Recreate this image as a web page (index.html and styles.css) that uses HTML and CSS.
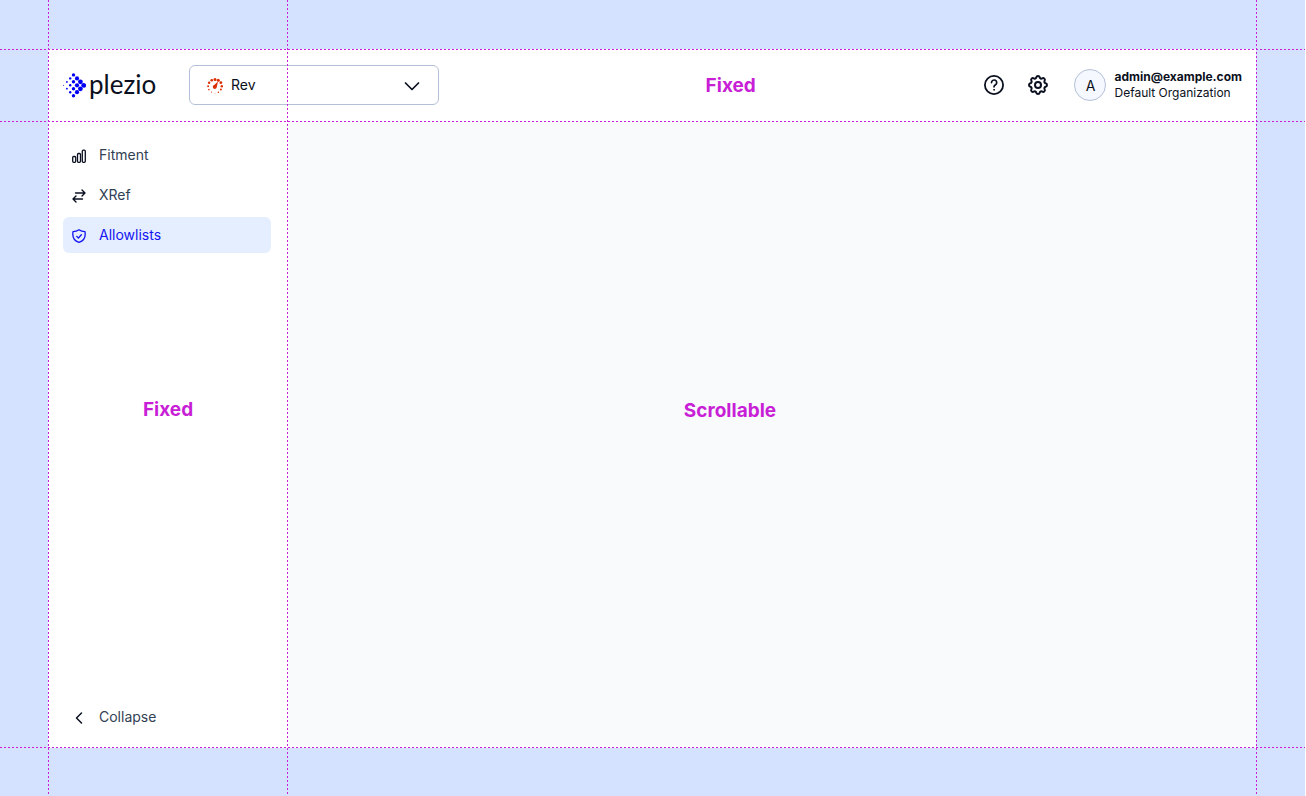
FILE: index.html
```html
<!DOCTYPE html>
<html lang="en">
<head>
<meta charset="utf-8">
<title>Plezio layout</title>
<link rel="stylesheet" href="styles.css">
</head>
<body>
<div class="stage">
  <div class="app">
    <header class="header">
      <a class="logo" href="#">
        <svg class="logo-mark" viewBox="0 0 24 26" width="24" height="26" fill="#0000f5" aria-hidden="true">
          <circle cx="1.5" cy="13.3" r=".5"/>
          <circle cx="4.9" cy="9.9" r=".9"/><circle cx="4.9" cy="16.7" r=".9"/>
          <circle cx="8.2" cy="6.4" r="1.2"/><circle cx="8.2" cy="13.3" r="1.2"/><circle cx="8.2" cy="20.2" r="1.2"/>
          <circle cx="11.5" cy="2.9" r="1.7"/><circle cx="11.5" cy="9.8" r="1.7"/><circle cx="11.5" cy="16.8" r="1.7"/><circle cx="11.5" cy="23.7" r="1.7"/>
          <circle cx="15" cy="6.4" r="2.1"/><circle cx="15" cy="13.3" r="2.1"/><circle cx="15" cy="20.2" r="2.1"/>
          <circle cx="18.4" cy="9.8" r="2.4"/><circle cx="18.4" cy="16.8" r="2.4"/>
          <circle cx="21.7" cy="13.3" r="2.4"/>
        </svg>
        <span class="logo-text">plezio</span>
      </a>
      <button class="picker" type="button">
        <svg class="product" viewBox="0 0 16 16" width="16" height="16" fill="#dc2f02" aria-hidden="true">
          <circle cx="8" cy="1.5" r="1.5"/><circle cx="4.7" cy="2.3" r="1.300"/><circle cx="2.1" cy="4.7" r="1.200"/><circle cx="1.100" cy="8.3" r="1"/><circle cx="1.9" cy="11.6" r=".8"/><circle cx="4.5" cy="14" r=".6"/><circle cx="8" cy="15.2" r=".4"/>
          <circle cx="11.3" cy="2.3" r="1.5"/><circle cx="13.900" cy="4.700" r="1.4"/><circle cx="14.800" cy="8.3" r="1.200"/><circle cx="13.900" cy="11.6" r="1"/><circle cx="11.4" cy="14.2" r=".8"/>
          <path d="M11 3.500 9.800 9a2 2 0 1 1-2.600-2z"/>
        </svg>
        <span class="picker-name">Rev</span>
        <svg class="line arrow" viewBox="0 0 16 16" width="16" height="16" aria-hidden="true"><path d="m1.500 5 6.500 6.500L14.500 5" stroke-width="1.700"/></svg>
      </button>
      <strong class="note">Fixed</strong>
      <button class="icon-button" type="button" aria-label="Help">
        <svg class="line" viewBox="0 0 20 20" width="20" height="20"><circle cx="10" cy="10" r="9.100" stroke-width="1.8"/><path d="M7.500 7.600a2.600 2.600 0 1 1 4 2.200c-.9.600-1.500 1-1.500 2" stroke-width="1.700"/><circle cx="10" cy="14.800" r=".5" stroke-width="1"/></svg>
      </button>
      <button class="icon-button" type="button" aria-label="Settings">
        <svg class="line" viewBox="2 2 20 20" width="20" height="20" stroke-width="2"><path d="M10.325 4.317c.426-1.756 2.924-1.756 3.350 0a1.724 1.724 0 0 0 2.573 1.066c1.543-.94 3.310.826 2.370 2.370a1.724 1.724 0 0 0 1.065 2.572c1.756.426 1.756 2.924 0 3.350a1.724 1.724 0 0 0-1.066 2.573c.94 1.543-.826 3.310-2.370 2.370a1.724 1.724 0 0 0-2.572 1.065c-.426 1.756-2.924 1.756-3.350 0a1.724 1.724 0 0 0-2.573-1.066c-1.543.94-3.310-.826-2.370-2.370a1.724 1.724 0 0 0-1.065-2.572c-1.756-.426-1.756-2.924 0-3.350a1.724 1.724 0 0 0 1.066-2.573c-.94-1.543.826-3.310 2.370-2.370 1 .608 2.296.070 2.572-1.065z"/><circle cx="12" cy="12" r="3"/></svg>
      </button>
      <div class="account">
        <span class="avatar">A</span>
        <div class="account-text"><strong>admin@example.com</strong><span>Default Organization</span></div>
      </div>
    </header>
    <nav class="sidebar">
      <a class="item" href="#"><svg class="line" viewBox="0 0 16 16" width="16" height="16" stroke-width="1.300"><rect x="1.700" y="8.500" width="3" height="5.800" rx="1"/><rect x="6.500" y="5.500" width="3" height="8.800" rx="1"/><rect x="11.300" y="2.200" width="3" height="12.100" rx="1"/></svg>Fitment</a>
      <a class="item" href="#"><svg class="line" viewBox="0 0 16 16" width="16" height="16" stroke-width="1.400"><path d="M4.500 5H14M11 2l3 3-3 3M11.500 11H2M5 8l-3 3 3 3"/></svg>XRef</a>
      <a class="item active" href="#"><svg class="line" viewBox="0 0 16 16" width="16" height="16" stroke-width="1.300"><path d="M8 1.800C6.200 3.200 4.300 3.700 2 3.700c-.8 5 1.300 9.200 6 10.700 4.700-1.500 6.800-5.700 6-10.700-2.300 0-4.200-.5-6-1.900z"/><path d="m5.700 8.400 1.700 1.600 3-3.300"/></svg>Allowlists</a>
      <strong class="note">Fixed</strong>
      <button class="item" type="button"><svg class="line" viewBox="0 0 16 16" width="16" height="16" stroke-width="1.500"><path d="M10.500 3 5.500 8l5 5"/></svg>Collapse</button>
    </nav>
    <main class="content"><strong class="note">Scrollable</strong></main>
  </div>
  <i class="guide down at-left"></i>
  <i class="guide down at-split"></i>
  <i class="guide down at-right"></i>
  <i class="guide across at-top"></i>
  <i class="guide across at-header"></i>
  <i class="guide across at-bottom"></i>
</div>
</body>
</html>
```
FILE: styles.css
```css
:root {
  --edge: 48px;
  --top: 49px;
  --side: 240px;
  --bar: 72px;
  --ink: #0b1020;
  --slate: #334155;
  --pink: #c81fd6;
}
* { box-sizing: border-box; }
body {
  margin: 0;
  font-family: Inter, "Liberation Sans", sans-serif;
  font-size: 14px;
  color: var(--ink);
}
button { font: inherit; color: inherit; background: none; border: 0; padding: 0; }
a { color: inherit; text-decoration: none; }
svg { display: block; flex: none; }
.line { fill: none; stroke: currentColor; stroke-linecap: round; stroke-linejoin: round; }
.stage {
  position: relative;
  display: grid;
  min-height: 100vh;
  padding: var(--top) 49px 48px var(--edge);
  background: #d4e1ff;
  border-right: 1px solid #fff;
}
.app {
  display: grid;
  grid-template: var(--bar) 1fr / var(--side) 1fr;
  background: #fff;
}
.header {
  grid-column: 1 / -1;
  display: flex;
  align-items: center;
  padding: 0 14px;
}
.logo { display: flex; align-items: center; gap: 3px; width: 127px; }
.logo-text { padding-bottom: 2px; font: 26px/32px Lato, sans-serif; }
.picker {
  display: flex;
  align-items: center;
  gap: 8px;
  width: 250px;
  height: 40px;
  padding: 0 18px 2px 17px;
  border: 1px solid #b4c0d8;
  border-radius: 6px;
}
.product, .arrow { margin-top: 4px; }
.picker-name { flex: 1; text-align: left; }
.note { font-size: 19px; line-height: 24px; font-weight: 700; color: var(--pink); }
.header .note { flex: 1; text-align: center; padding: 2px 0 0 50px; }
.icon-button { display: grid; place-items: center; width: 44px; height: 44px; }
.account { display: flex; align-items: center; gap: 8px; padding-left: 14px; }
.avatar {
  display: grid;
  place-items: center;
  width: 32px;
  height: 32px;
  border: 1px solid #b4c0d8;
  border-radius: 50%;
  background: #f5f9ff;
}
.account-text { display: grid; font-size: 12px; line-height: 16px; }
.sidebar {
  display: flex;
  flex-direction: column;
  gap: 4px;
  padding: 16px 17px 13px 15px;
}
.sidebar .note { margin: auto; padding: 0 0 132px 2px; }
.item {
  display: flex;
  align-items: center;
  gap: 12px;
  height: 36px;
  padding: 0 8px 2px;
  border-radius: 6px;
  color: var(--slate);
}
.item svg { margin-top: 4px; color: var(--ink); }
.active { background: #e4eeff; }
.active, .active svg { color: #1414f0; }
.content {
  display: grid;
  place-items: center;
  padding: 0 84px 48px 0;
  background: #f8fafc;
}
.guide { position: absolute; }
.down {
  top: 0;
  bottom: 0;
  width: 1px;
  background: repeating-linear-gradient(var(--pink) 0 2px, transparent 2px 4px);
}
.across {
  left: 0;
  right: 0;
  height: 1px;
  background: repeating-linear-gradient(90deg, var(--pink) 0 2px, transparent 2px 4px);
}
.at-left { left: var(--edge); }
.at-split { left: calc(var(--edge) + var(--side) - 1px); }
.at-right { right: 48px; }
.at-top { top: var(--top); }
.at-header { top: calc(var(--top) + var(--bar)); }
.at-bottom { bottom: 48px; }
```
